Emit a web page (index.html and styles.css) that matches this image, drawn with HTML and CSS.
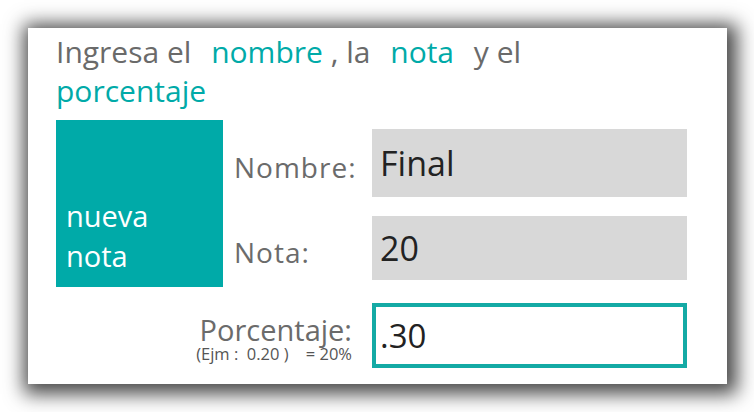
FILE: index.html
```html
<!DOCTYPE html>
<html lang="es">
<head>
<meta charset="utf-8">
<title>Nueva nota</title>
<link rel="stylesheet" href="styles.css">
</head>
<body>
<div class="card">
  <p class="intro">Ingresa el <span class="hl">nombre</span> , la <span class="hl hl-end">nota</span> y el <span class="hl-first">porcentaje</span></p>
  <div class="form">
    <div class="tile">nueva<br>nota</div>
    <label class="label label-nombre" for="nombre">Nombre:</label>
    <input class="field" id="nombre" type="text" value="Final">
    <label class="label label-nota" for="nota">Nota:</label>
    <input class="field" id="nota" type="text" value="20">
    <div class="label-pct">
      <label class="pct-title" for="pct">Porcentaje:</label>
      <span class="pct-hint">(Ejm :  0.20 )    = 20%</span>
    </div>
    <input class="field field-active" id="pct" type="text" value=".30">
  </div>
</div>
</body>
</html>
```
FILE: styles.css
```css
html, body {
  margin: 0;
  background: #ffffff;
}
body {
  min-height: 412px;
  box-sizing: border-box;
  padding: 28px 0 28px 28px;
  font-family: "Open Sans", "Noto Sans", sans-serif;
}
.card {
  width: 699px;
  height: 356px;
  box-sizing: border-box;
  background: #ffffff;
  box-shadow: 3px 3px 18px 7px rgba(0, 0, 0, 0.72);
  padding: 4px 0 0 28px;
}
.intro {
  margin: 0;
  width: 480px;
  font-size: 30px;
  line-height: 39px;
  color: #6a6a6a;
}
.hl {
  color: #00aaa8;
  margin-left: 12px;
}
.hl-end {
  margin-right: 12px;
}
.hl-first {
  color: #00aaa8;
}
.form {
  margin-top: 19px;
  display: grid;
  grid-template-columns: 167px 149px 315px;
  grid-template-rows: 68px 64px 65px;
  row-gap: 19px;
}
.tile {
  grid-column: 1;
  grid-row: 1 / 3;
  margin: -9px 0 -7px 0;
  background: #00aaa8;
  color: #ffffff;
  font-size: 29px;
  line-height: 40px;
  padding: 0 0 11px 10px;
  display: flex;
  flex-direction: column;
  justify-content: flex-end;
}
.label {
  grid-column: 2;
  font-size: 28px;
  line-height: 1;
  color: #6b6b6b;
  padding-left: 11px;
  letter-spacing: 1px;
}
.label-nombre {
  grid-row: 1;
  padding-top: 24px;
}
.label-nota {
  grid-row: 2;
  padding-top: 22px;
}
.field {
  grid-column: 3;
  box-sizing: border-box;
  width: 315px;
  margin: 0;
  border: none;
  outline: none;
  background: #d8d8d8;
  color: #222222;
  font-family: "Open Sans", "Noto Sans", sans-serif;
  font-size: 34px;
  padding: 0 0 0 8px;
}
#nombre { grid-row: 1; height: 68px; }
#nota { grid-row: 2; height: 64px; }
.label-pct {
  grid-column: 1 / 3;
  grid-row: 3;
  margin-top: 4px;
  padding: 12px 20px 0 0;
  color: #6b6b6b;
  display: flex;
  flex-direction: column;
  align-items: flex-end;
}
.pct-title {
  font-size: 29px;
  line-height: 30px;
}
.pct-hint {
  font-size: 16.5px;
  line-height: 17px;
  white-space: pre;
  color: #555555;
}
.field-active {
  grid-row: 3;
  margin-top: 4px;
  height: 65px;
  background: #ffffff;
  border: 4px solid #14aaa5;
  padding-left: 4px;
  font-size: 33px;
}
```
